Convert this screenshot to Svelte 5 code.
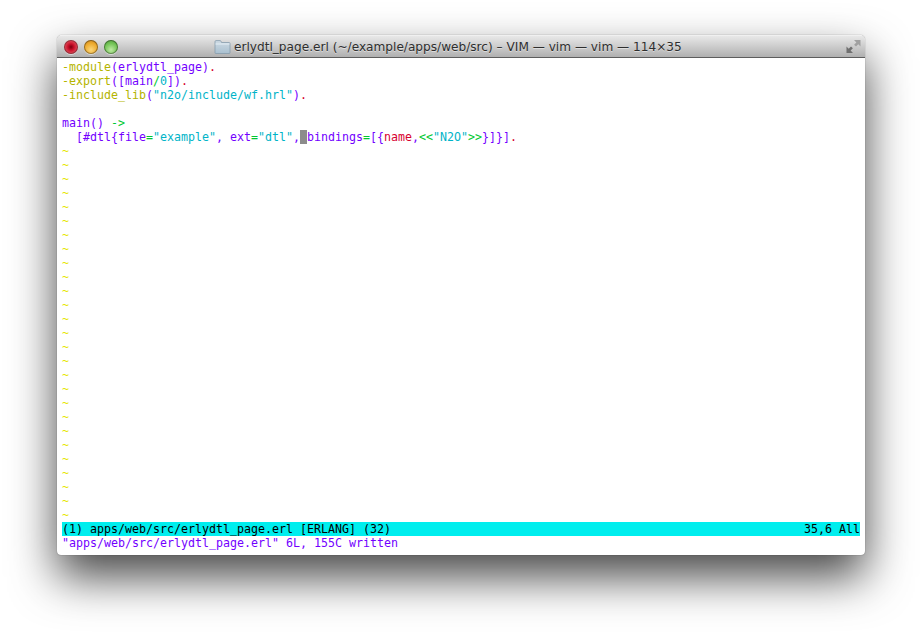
<script lang="ts">
  type Seg = [string, string];
  const code: Seg[][] = [
    [["ol", "-module"], ["pu", "(erlydtl_page)"], ["re", "."]],
    [["ol", "-export"], ["pu", "([main"], ["gr", "/"], ["cy", "0"], ["pu", "])"], ["re", "."]],
    [["ol", "-include_lib"], ["pu", "("], ["cy", "\"n2o/include/wf.hrl\""], ["pu", ")"], ["re", "."]],
    [],
    [["pu", "main() "], ["gr", "->"]],
    [
      ["pu", "  [#dtl{file"], ["gr", "="], ["cy", "\"example\""], ["pu", ", ext"], ["gr", "="], ["cy", "\"dtl\""],
      ["pu", ","], ["cur", " "], ["pu", "bindings"], ["gr", "="], ["pu", "[{"], ["re", "name"], ["pu", ","],
      ["gr", "<<"], ["cy", "\"N2O\""], ["gr", ">>"], ["pu", "}]}]"], ["re", "."]
    ]
  ];
  const tildes = Array(27).fill("~");
</script>

<div class="page">
  <div class="window">
    <div class="titlebar">
      <div class="lights">
        <span class="light red"></span>
        <span class="light amber"></span>
        <span class="light green"></span>
      </div>
      <div class="title">
        <svg width="17" height="14" viewBox="0 0 17 14">
          <defs>
            <linearGradient id="folder" x1="0" y1="0" x2="0" y2="1">
              <stop offset="0" stop-color="#cfdbe4" />
              <stop offset="1" stop-color="#a9c0d0" />
            </linearGradient>
          </defs>
          <path d="M1 3V1.6C1 1 1.4.6 2 .6h4c.6 0 .9.3 1.1.8L7.5 2.500H15c.6 0 1 .4 1 1V13c0 .3-.3.5-.6.5H1.600c-.3 0-.6-.2-.6-.5z" fill="url(#folder)" stroke="#869cac" stroke-width=".8" />
          <path d="M1.500 4h14" stroke="#e4eef5" stroke-width="1" />
        </svg>
        <span>erlydtl_page.erl (~/example/apps/web/src) – VIM — vim — vim — 114×35</span>
      </div>
      <svg class="resize" width="15" height="15" viewBox="0 0 15 15">
        <path d="M8 1h6.500v6.500l-2.200-2.200-2.300 2.300-1.900-1.900 2.300-2.300z" fill="#a0a0a0" />
        <path d="M7 14H.5V7.500l2.200 2.200 2.300-2.300 1.900 1.900-2.300 2.300z" fill="#6f6f6f" />
      </svg>
    </div>
    <div class="term">
      {#each code as line}
        <div class="row">
          {#each line as [cls, text]}<span class={cls}>{text}</span>{/each}
        </div>
      {/each}
      {#each tildes as t}
        <div class="row ti">{t}</div>
      {/each}
      <div class="row status">
        <span>(1) apps/web/src/erlydtl_page.erl [ERLANG] (32)</span>
        <span>35,6 All</span>
      </div>
      <div class="row pu">"apps/web/src/erlydtl_page.erl" 6L, 155C written</div>
    </div>
  </div>
</div>

<style>
  :global(body) {
    background: #fff;
    overflow: hidden;
  }

  .page {
    width: 922px;
    height: 634px;
    box-sizing: border-box;
    padding: 35px 57px;
  }

  .window {
    width: 808px;
    height: 520px;
    background: #fff;
    border-radius: 5px 5px 4px 4px;
    box-shadow: 0 22px 46px rgba(0, 0, 0, 0.72), 0 0 1px rgba(0, 0, 0, 0.6);
    overflow: hidden;
  }

  .titlebar {
    height: 21px;
    display: flex;
    align-items: center;
    padding: 0 4px 0 7px;
    background: linear-gradient(#e8e8e8, #b0b0b0);
    border-top: 1px solid #f0f0f0;
    border-bottom: 1px solid #5d5d5d;
  }

  .lights {
    display: flex;
    gap: 6px;
  }

  .light {
    width: 14px;
    height: 14px;
    border-radius: 50%;
    box-shadow: inset 0 0 0 1px rgba(0, 0, 0, 0.35), 0 1px 0 rgba(255, 255, 255, 0.5);
  }

  .red {
    background: radial-gradient(circle at 50% 50%, #7a0010 0, #c8102a 30%, #ef6a72 85%);
  }

  .amber {
    background: radial-gradient(circle at 50% 70%, #fbd77a 0, #eda92c 55%, #b97b1e 100%);
  }

  .green {
    background: radial-gradient(circle at 50% 70%, #bfeaa4 0, #71c354 55%, #4c8f3a 100%);
  }

  .title {
    display: flex;
    align-items: center;
    gap: 3px;
    margin-left: 96px;
    font-family: "DejaVu Sans", sans-serif;
    font-size: 12.13px;
    color: #2e2e2e;
    white-space: nowrap;
    text-shadow: 0 1px 0 rgba(255, 255, 255, 0.45);
  }

  .resize {
    margin-left: auto;
  }

  .term {
    padding: 2px 5px 0;
    font-family: "DejaVu Sans Mono", monospace;
    font-size: 11.63px;
    color: #000;
  }

  .row {
    height: 14px;
    line-height: 14px;
    white-space: pre;
  }

  .status {
    display: flex;
    justify-content: space-between;
    background: #00eeee;
  }

  .ol { color: #b4b400; }
  .pu { color: #7300ff; }
  .re { color: #d7002f; }
  .gr { color: #00c832; }
  .cy { color: #00b4c8; }
  .ti { color: #e6e600; }
  .cur { background: #8c8c8c; }
</style>
